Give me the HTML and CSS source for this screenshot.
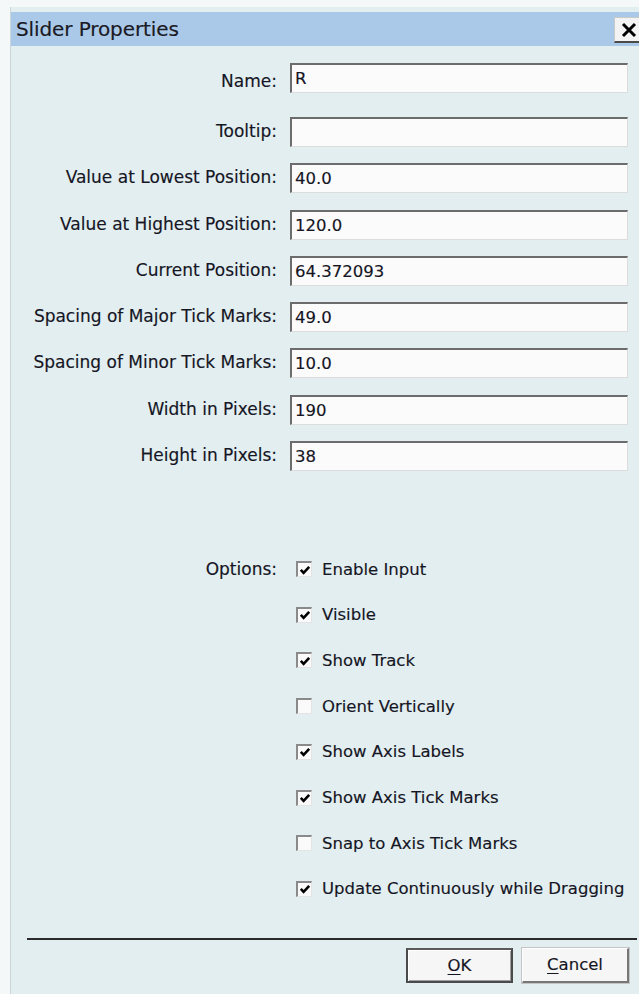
FILE: index.html
```html
<!DOCTYPE html>
<html lang="en">
<head>
<meta charset="utf-8">
<title>Slider Properties</title>
<link rel="stylesheet" href="styles.css">
</head>
<body>
<div class="dialog">
  <div class="titlebar">
    <span class="title">Slider Properties</span>
    <button class="close" type="button" aria-label="Close">
      <svg width="16" height="16" viewBox="0 0 16 16"><path d="M2 2 L14 14 M14 2 L2 14" stroke="#000" stroke-width="3" fill="none"/></svg>
    </button>
  </div>

  <div class="fields">
    <label class="lbl">Name:</label><div class="field first">R</div>
    <label class="lbl">Tooltip:</label><div class="field"></div>
    <label class="lbl">Value at Lowest Position:</label><div class="field">40.0</div>
    <label class="lbl">Value at Highest Position:</label><div class="field">120.0</div>
    <label class="lbl">Current Position:</label><div class="field">64.372093</div>
    <label class="lbl">Spacing of Major Tick Marks:</label><div class="field">49.0</div>
    <label class="lbl">Spacing of Minor Tick Marks:</label><div class="field">10.0</div>
    <label class="lbl">Width in Pixels:</label><div class="field">190</div>
    <label class="lbl">Height in Pixels:</label><div class="field">38</div>
  </div>

  <div class="options">
    <div class="lbl opt-lbl">Options:</div>
    <div class="checks">
      <div class="check"><span class="box on"><svg width="12" height="12" viewBox="0 0 12 12"><path d="M1.8 5.8 L4.6 8.8 L10.2 2.8" stroke="#000" stroke-width="2.6" fill="none"/></svg></span>Enable Input</div>
      <div class="check"><span class="box on"><svg width="12" height="12" viewBox="0 0 12 12"><path d="M1.8 5.8 L4.6 8.8 L10.2 2.8" stroke="#000" stroke-width="2.6" fill="none"/></svg></span>Visible</div>
      <div class="check"><span class="box on"><svg width="12" height="12" viewBox="0 0 12 12"><path d="M1.8 5.8 L4.6 8.8 L10.2 2.8" stroke="#000" stroke-width="2.6" fill="none"/></svg></span>Show Track</div>
      <div class="check"><span class="box"></span>Orient Vertically</div>
      <div class="check"><span class="box on"><svg width="12" height="12" viewBox="0 0 12 12"><path d="M1.8 5.8 L4.6 8.8 L10.2 2.8" stroke="#000" stroke-width="2.6" fill="none"/></svg></span>Show Axis Labels</div>
      <div class="check"><span class="box on"><svg width="12" height="12" viewBox="0 0 12 12"><path d="M1.8 5.8 L4.6 8.8 L10.2 2.8" stroke="#000" stroke-width="2.6" fill="none"/></svg></span>Show Axis Tick Marks</div>
      <div class="check"><span class="box"></span>Snap to Axis Tick Marks</div>
      <div class="check"><span class="box on"><svg width="12" height="12" viewBox="0 0 12 12"><path d="M1.8 5.8 L4.6 8.8 L10.2 2.8" stroke="#000" stroke-width="2.6" fill="none"/></svg></span>Update Continuously while Dragging</div>
    </div>
  </div>

  <div class="separator"></div>

  <div class="buttons">
    <button class="btn default" type="button"><u>O</u>K</button>
    <button class="btn" type="button"><u>C</u>ancel</button>
  </div>
</div>
</body>
</html>
```

FILE: styles.css
```css
html, body {
  margin: 0;
  padding: 0;
  background: #f5f8f8;
  overflow: hidden;
  height: 994px;
}

body {
  font-family: "DejaVu Sans", Verdana, sans-serif;
  font-size: 16.5px;
  color: #151524;
  -webkit-text-stroke: 0.15px #151524;
}

.dialog {
  margin: 7px 0 0 10px;
  width: 636px;
  height: 987px;
  padding-top: 5px;
  box-sizing: border-box;
  background: #e2eef0;
  border-left: 1px solid #cdd6d8;
}

/* caption strip */
.titlebar {
  height: 34px;
  background: #aac8e7;
  display: flex;
  align-items: center;
  justify-content: space-between;
  padding-left: 5px;
}

.title {
  font-size: 20px;
  color: #1a1a24;
  letter-spacing: -0.1px;
}

.close {
  width: 32px;
  height: 26px;
  margin-top: 2px;
  padding: 0 0 0 6px;
  display: flex;
  align-items: center;
  justify-content: flex-start;
  background: #f3f3f3;
  border: 1px solid #c9c9c9;
  border-bottom: 2px solid #4a4a4a;
  border-right: none;
}

/* label / text-field grid */
.fields {
  display: grid;
  grid-template-columns: 266px 338px;
  column-gap: 13px;
  row-gap: 16.3px;
  padding-top: 17px;
  align-items: center;
}

.lbl {
  text-align: right;
  white-space: nowrap;
}

.fields .lbl {
  font-size: 17px;
  position: relative;
  top: -1px;
}

.field {
  height: 30px;
  box-sizing: border-box;
  background: #fbfbfb;
  border-top: 2px solid #6c6c6c;
  border-left: 2px solid #6c6c6c;
  border-right: 1px solid #dcdcdc;
  border-bottom: 1px solid #dcdcdc;
  padding: 2px 0 0 3px;
  line-height: 24px;
}

.field.first {
  margin-bottom: 7.7px;
}

/* checkbox list */
.options {
  display: grid;
  grid-template-columns: 266px 338px;
  column-gap: 13px;
  margin-top: 87px;
  align-items: start;
}

.opt-lbl {
  line-height: 22px;
  font-size: 17px;
}

.checks {
  display: flex;
  flex-direction: column;
  gap: 23.7px;
  padding-left: 6px;
}

.check {
  display: flex;
  align-items: center;
  height: 22px;
  white-space: nowrap;
}

.box {
  width: 16px;
  height: 16px;
  box-sizing: border-box;
  margin-right: 10px;
  background: #fafafa;
  border-top: 2px solid #8a8a8a;
  border-left: 2px solid #8a8a8a;
  border-right: 1px solid #e4e4e4;
  border-bottom: 1px solid #e4e4e4;
  display: flex;
  align-items: center;
  justify-content: center;
}

.box svg {
  display: block;
}

.separator {
  margin: 38px 0 0 16px;
  width: 610px;
  height: 2px;
  background: #2b2b2b;
}

.buttons {
  display: flex;
  gap: 9px;
  padding-left: 395px;
  margin-top: 8px;
}

.btn {
  width: 107px;
  height: 35px;
  box-sizing: border-box;
  font-family: "DejaVu Sans", Verdana, sans-serif;
  font-size: 16.5px;
  color: #151524;
  -webkit-text-stroke: 0.15px #151524;
  background: #f6f6f6;
  border-top: 1px solid #ffffff;
  border-left: 1px solid #ffffff;
  border-right: 2px solid #777777;
  border-bottom: 2px solid #777777;
  outline: 1px solid #c4c4c4;
  padding: 0;
}

.btn.default {
  border: 2px solid #4a4a4a;
  border-top-color: #5a5a5a;
  outline: none;
  box-shadow: inset 1px 1px 0 #ffffff, inset -1px -1px 0 #a0a0a0;
}

.btn u {
  text-underline-offset: 3px;
}
```
